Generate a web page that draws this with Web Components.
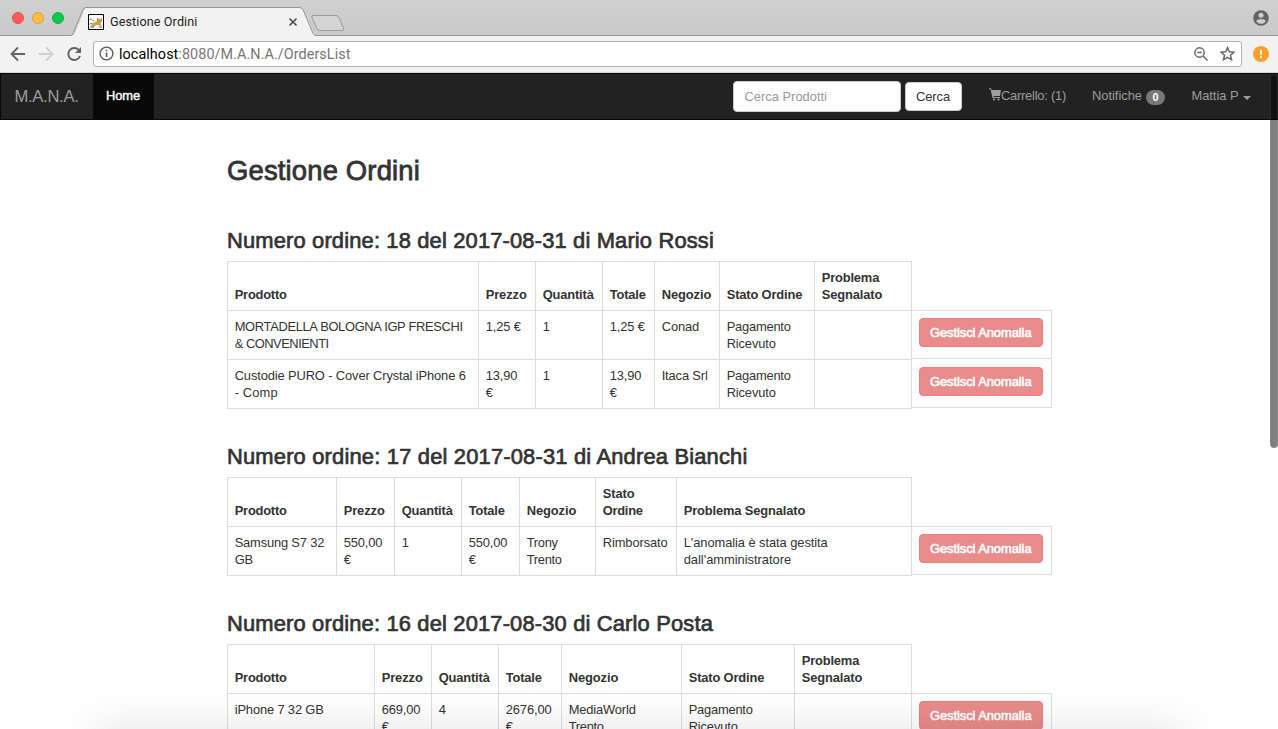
<!DOCTYPE html>
<html lang="it">
<head>
<meta charset="utf-8">
<title>Gestione Ordini</title>
<style>
html,body{margin:0;height:729px;overflow:hidden;background:#fff}
body{font:12.9px/17px "Liberation Sans",Arial,sans-serif;color:#333}
</style>
</head>
<body>
<browser-window>
  <browser-tabs slot="chrome"></browser-tabs>
  <browser-toolbar slot="chrome"></browser-toolbar>
  <site-navbar></site-navbar>
  <orders-page></orders-page>
</browser-window>
<script>
const define = (name, html, setup) => customElements.define(name, class extends HTMLElement {
  connectedCallback() {
    if (this.shadowRoot) return;
    const t = document.createElement('template');
    t.innerHTML = typeof html === 'function' ? html(this) : html;
    this.attachShadow({mode: 'open'}).append(t.content.cloneNode(true));
    if (setup) setup(this);
  }
});

define('browser-window', `<style>
:host{display:flex;flex-direction:column;width:1278px;height:729px;position:relative;overflow:hidden}
.view{position:relative;height:656px;overflow:hidden}
.bar{position:absolute;right:0;top:1px;width:8px;height:374px;box-sizing:border-box;background:rgba(0,0,0,.5);border-radius:4px;box-shadow:inset 0 0 0 1px rgba(255,255,255,.1)}
.shade{position:absolute;left:66px;right:66px;bottom:0;height:38px;background:linear-gradient(rgba(0,0,0,0),rgba(0,0,0,.018) 50%,rgba(0,0,0,.055));-webkit-mask-image:linear-gradient(90deg,transparent,#000 60px,#000 calc(100% - 60px),transparent)}
</style><slot name="chrome"></slot><div class="view"><slot></slot><div class="bar"></div></div><div class="shade"></div>`);

define('browser-tabs', `<style>
:host{display:block;height:36px;background:linear-gradient(#d0d0d0,#cacaca);position:relative;color:#222}
.frame{position:absolute;left:0;top:0}
.row{position:relative;display:flex;align-items:center;height:36px;padding-top:7px;box-sizing:border-box}
.dots{display:flex;gap:8px;margin:-7px 0 0 12px}
.dots i{width:12px;height:12px;border-radius:50%;box-sizing:border-box}
.fav{margin-left:24px}
.title{margin-left:6px;width:180px;font-family:Roboto,sans-serif;font-size:12.6px}
.user{margin:-8px 9px 0 auto}
svg{display:block}
</style>
<svg class="frame" width="1278" height="36" viewBox="0 0 1278 36"><path d="M0 35.5H72q2 0 3-3L84.500 9.500q1-2 3-2H299q3 0 4 2l10.500 24q1 2 3 2H1278V36H0Z" fill="#f2f2f2"/><path d="M0 35.500H71q1.500 0 2.500-3L83 9.500q1-2 3-2H299q3 0 4 2l10 24q1 2 3 2H1278" fill="none" stroke="#959595"/><path d="M313 15.500h23q2 0 3 2l4.500 11q.6 2-1.500 2h-22q-2 0-3-2l-5-11q-.6-2 1-2Z" fill="#d4d4d4" stroke="#9a9a9a"/></svg>
<div class="row"><div class="dots"><i style="background:#fc5b57;border:1px solid #e2504b"></i><i style="background:#fdbc40;border:1px solid #e0a13b"></i><i style="background:#07ca4b;border:1px solid #15ae40"></i></div>
<svg class="fav" width="16" height="16" viewBox="0 0 16 16"><path d="M.5.5h15v15H.5z" fill="#fff" stroke="#000"/><path d="M3 12.500q0-2.500 2-3.500l3.500-1.500L9 4l1.500 1h2L14 3.500v4L12.500 9l1 3.500-3-1.500-3 .5-2 1.500Z" fill="#cfa04a"/><path d="M1.500 5.500q2-1 3 .5T6.500 7M1.500 10.500q1.500-2 3-1M2 13h4M10.500 13H14M9.300 4l.8 1.500M10.500 6.500h.8M12.500 6.500h.6" fill="none" stroke="#777" stroke-width="1"/></svg>
<span class="title"><ui-fit w="87.500">Gestione Ordini</ui-fit></span>
<svg width="8" height="8" viewBox="0 0 8 8" style="margin-left:-1px"><path d="M.5.5l7 7m0-7l-7 7" stroke="#555" stroke-width="1.600"/></svg>
<svg class="user" width="16" height="16" viewBox="0 0 16 16"><circle cx="8" cy="8" r="7.800" fill="#636363"/><circle cx="8" cy="5.200" r="2.500" fill="#cecece"/><path d="M3.200 11.300c1-3.200 8.600-3.200 9.600 0-2.200 3.400-7.400 3.400-9.600 0Z" fill="#cecece"/></svg></div>`);

define('browser-toolbar', `<style>
:host{display:flex;align-items:center;height:37px;box-sizing:border-box;background:#f2f2f2;border-bottom:1px solid #d4d4d4;padding:0 9px 1px 10px;color:#777}
svg{display:block;flex:none}
.url{display:flex;align-items:center;box-sizing:border-box;width:1149px;height:26px;border:1px solid #b4b4b4;border-radius:3px;background:#fff;margin:0 11px 0 11px;padding:0 6px 0 5px}
.t{flex:1;margin-left:5px;padding-top:2px;font:14.4px/20px Roboto,sans-serif}
b{font-weight:400;color:#000}
</style>
<svg width="72" height="16" viewBox="0 0 72 16"><path d="M15 8H2.500M8 1.500L1.500 8 8 14.500" fill="none" stroke="#636363" stroke-width="1.800"/><path d="M29 8h12.500M36 1.500L42.500 8 36 14.500" fill="none" stroke="#d0d0d0" stroke-width="1.800"/><path d="M69.200 4.500A6 6 0 1 0 70 10" fill="none" stroke="#636363" stroke-width="1.900"/><path d="M71 1v6h-6Z" fill="#636363"/></svg>
<div class="url"><svg width="15" height="15" viewBox="0 0 15 15"><circle cx="7.500" cy="7.500" r="6.400" fill="none" stroke="#5a5a5a" stroke-width="1.400"/><path d="M7.500 6.500v4.500M7.500 3.700v1.600" stroke="#5a5a5a" stroke-width="1.600"/></svg>
<span class="t"><ui-fit w="231.500"><b>localhost</b>:8080/M.A.N.A./OrdersList</ui-fit></span>
<svg width="14" height="14" viewBox="0 0 14 14"><circle cx="5.500" cy="5.500" r="4.700" fill="none" stroke="#666" stroke-width="1.400"/><path d="M3.300 5.500h4.400M9 9l4.500 4.500" stroke="#666" stroke-width="1.500"/></svg>
<svg width="15" height="15" viewBox="0 0 24 24" style="margin-left:12px"><path d="M12 2.500l2.900 6.800 7.500.6-5.700 4.900 1.800 7.200-6.500-3.900-6.500 3.900 1.800-7.200L1.600 9.900l7.500-.6Z" fill="none" stroke="#666" stroke-width="2.300"/></svg></div>
<svg width="16" height="16" viewBox="0 0 16 16"><circle cx="8" cy="8" r="8" fill="#f9a02d"/><path d="M8 4v4.500M8 10v2" stroke="#fff" stroke-width="2"/></svg>`);

define('site-navbar', `<style>
:host{display:flex;box-sizing:border-box;height:47px;background:#222;border:1px solid #080808;border-right:0;color:#9d9d9d;align-items:stretch}
.brand{width:92px;box-sizing:border-box;padding:0 0 0 13.500px;font-size:16.6px;line-height:46px}
.home{width:61px;box-sizing:border-box;background:#080808;color:#fff;padding-left:13px;line-height:44px;-webkit-text-stroke:.4px}
.form{display:flex;margin-left:579px;padding-top:7px;gap:4px}
.field,.btn{box-sizing:border-box;background:#fff;border:1px solid #ccc;border-radius:4px}
.field{width:168px;height:31px;padding-left:10.500px;color:#999;line-height:30px}
.btn{width:57px;height:29px;margin-top:1px;padding-left:10px;color:#333;line-height:28px}
.lnk{line-height:44px;display:flex}
.badge{display:block;width:19px;height:15px;border-radius:9px;background:#777;color:#fff;font:bold 10.8px/15px "Liberation Sans",sans-serif;text-align:center;margin:16px 0 0 4px}
.caret{border:4px solid transparent;border-top-color:#9d9d9d;border-bottom:0;width:0;height:0;margin:22px 0 0 5px}
svg{display:block;margin-top:14px}
</style>
<div class="brand"><ui-fit w="64">M.A.N.A.</ui-fit></div><div class="home"><ui-fit w="34">Home</ui-fit></div>
<div class="form"><div class="field"><ui-fit w="82.500">Cerca Prodotti</ui-fit></div><div class="btn"><ui-fit w="34">Cerca</ui-fit></div></div>
<div class="lnk" style="margin-left:27px"><svg width="12" height="13" viewBox="0 0 12 13"><path d="M0 .3h2l.6 1.700H12L11 8H4.500l.2 1.100H11v1H3.500L1.500 1.300H0Z" fill="#9d9d9d"/><circle cx="5" cy="11.500" r="1.100" fill="#9d9d9d"/><circle cx="9.500" cy="11.500" r="1.100" fill="#9d9d9d"/></svg><ui-fit w="65">Carrello: (1)</ui-fit></div>
<div class="lnk" style="margin-left:26px"><ui-fit w="50">Notifiche</ui-fit><span class="badge">0</span></div>
<div class="lnk" style="margin-left:26.500px"><ui-fit w="47">Mattia P</ui-fit><span class="caret"></span></div>`);

define('orders-page', `<style>
:host{display:block;padding:36px 0 0 227px}
h2{font-size:27.4px;line-height:30px;font-weight:400;margin:0 0 43px;-webkit-text-stroke:.8px}
</style><h2><ui-fit w="193">Gestione Ordini</ui-fit></h2>
<order-block data-key="18"></order-block><order-block data-key="17"></order-block><order-block data-key="16"></order-block>`);

// Cell text is written as "text@width", lines separated by "|".
const head = (stato, prob) => ['Prodotto@52', 'Prezzo@41', 'Quantità@51', 'Totale@36', 'Negozio@49.5', stato, prob];
const SO = 'Stato Ordine@75.5', PS = 'Problema@57.500|Segnalato@60.500', PR = 'Pagamento@64|Ricevuto@49';
const ORDERS = {
  18: {t: 'Numero ordine: 18 del 2017-08-31 di Mario Rossi', w: 487, cols: [251, 57, 67, 52, 65, 95, 97], head: head(SO, PS), rows: [
    ['MORTADELLA BOLOGNA IGP FRESCHI@228|& CONVENIENTI@94', '1,25 €@35', '1', '1,25 €@35', 'Conad@37.500', PR, ''],
    ['Custodie PURO - Cover Crystal iPhone 6@231|- Comp@43', '13,90@31.500|€', '1', '13,90@31.500|€', 'Itaca Srl@46', PR, '']]},
  17: {t: 'Numero ordine: 17 del 2017-08-31 di Andrea Bianchi', w: 520.5, cols: [109, 58, 67, 58, 76, 81, 235], head: head('Stato@32|Ordine@40', 'Problema Segnalato@121.500'), rows: [
    ['Samsung S7 32@89.500|GB@18', '550,00@38.500|€', '1', '550,00@38.500|€', 'Trony@31|Trento@35', 'Rimborsato@65', "L'anomalia è stata gestita@144|dall'amministratore@107.500"]]},
  16: {t: 'Numero ordine: 16 del 2017-08-30 di Carlo Posta', w: 486, cols: [147, 57, 67, 63, 120, 113, 117], head: head(SO, PS), rows: [
    ['iPhone 7 32 GB@89', '669,00@38.500|€', '4', '2676,00@46|€', 'MediaWorld@67|Trento@35', PR, '']]}
};
const cell = s => s.split('|').map(l => { const [t, w] = l.split('@'); return w ? `<div><ui-fit w="${w}">${t}</ui-fit></div>` : `<div>${t}</div>`; }).join('');

define('order-block', el => { const o = ORDERS[el.dataset.key]; return `<style>
:host{display:block;margin-bottom:36px}
h3{font-size:21.900px;line-height:24px;font-weight:400;margin:0 0 8px;-webkit-text-stroke:.7px}
.wrap{display:flex;align-items:flex-start}
.table{display:grid;grid-template-columns:${o.cols.map(c => c + 'px').join(' ')};grid-auto-rows:49px;border:solid #ddd;border-width:0 1px 1px 0}
.c{border:solid #ddd;border-width:1px 0 0 1px;padding:7px 0 0 6.700px;white-space:nowrap}
.h{font-weight:700;display:flex;flex-direction:column;justify-content:flex-end;padding:0 0 7px 6.700px}
.acts{width:140px;margin-top:49px;box-sizing:border-box;border:solid #ddd;border-width:0 1px 1px 0}
.a{height:49px;box-sizing:border-box;border-top:1px solid #ddd;padding:8px 0 0 7px}
.a:first-child{height:48px;padding-top:7px}
</style><h3><ui-fit w="${o.w}">${o.t}</ui-fit></h3>
<div class="wrap"><div class="table">${o.head.map(h => `<div class="c h">${cell(h)}</div>`).join('')}${o.rows.map(r => r.map(c => `<div class="c">${cell(c)}</div>`).join('')).join('')}</div>
<div class="acts">${o.rows.map(() => '<div class="a"><danger-button><ui-fit w="101.500">Gestisci Anomalia</ui-fit></danger-button></div>').join('')}</div></div>`; });

define('danger-button', `<style>:host{display:block;box-sizing:border-box;width:124px;height:29px;border:1px solid #e68080;border-radius:4px;background:#e98c8b;color:#fff;line-height:28px;padding-left:10px;-webkit-text-stroke:.6px}</style><slot></slot>`);

// Spreads the letters so that the text takes the advance width given in "w".
define('ui-fit', `<style>:host{display:inline-block;white-space:nowrap}</style><slot></slot>`, el => {
  const n = el.textContent.length, w = parseFloat(el.getAttribute('w'));
  el.style.letterSpacing = ((w - el.getBoundingClientRect().width) / n).toFixed(3) + 'px';
});
</script>
</body>
</html>
